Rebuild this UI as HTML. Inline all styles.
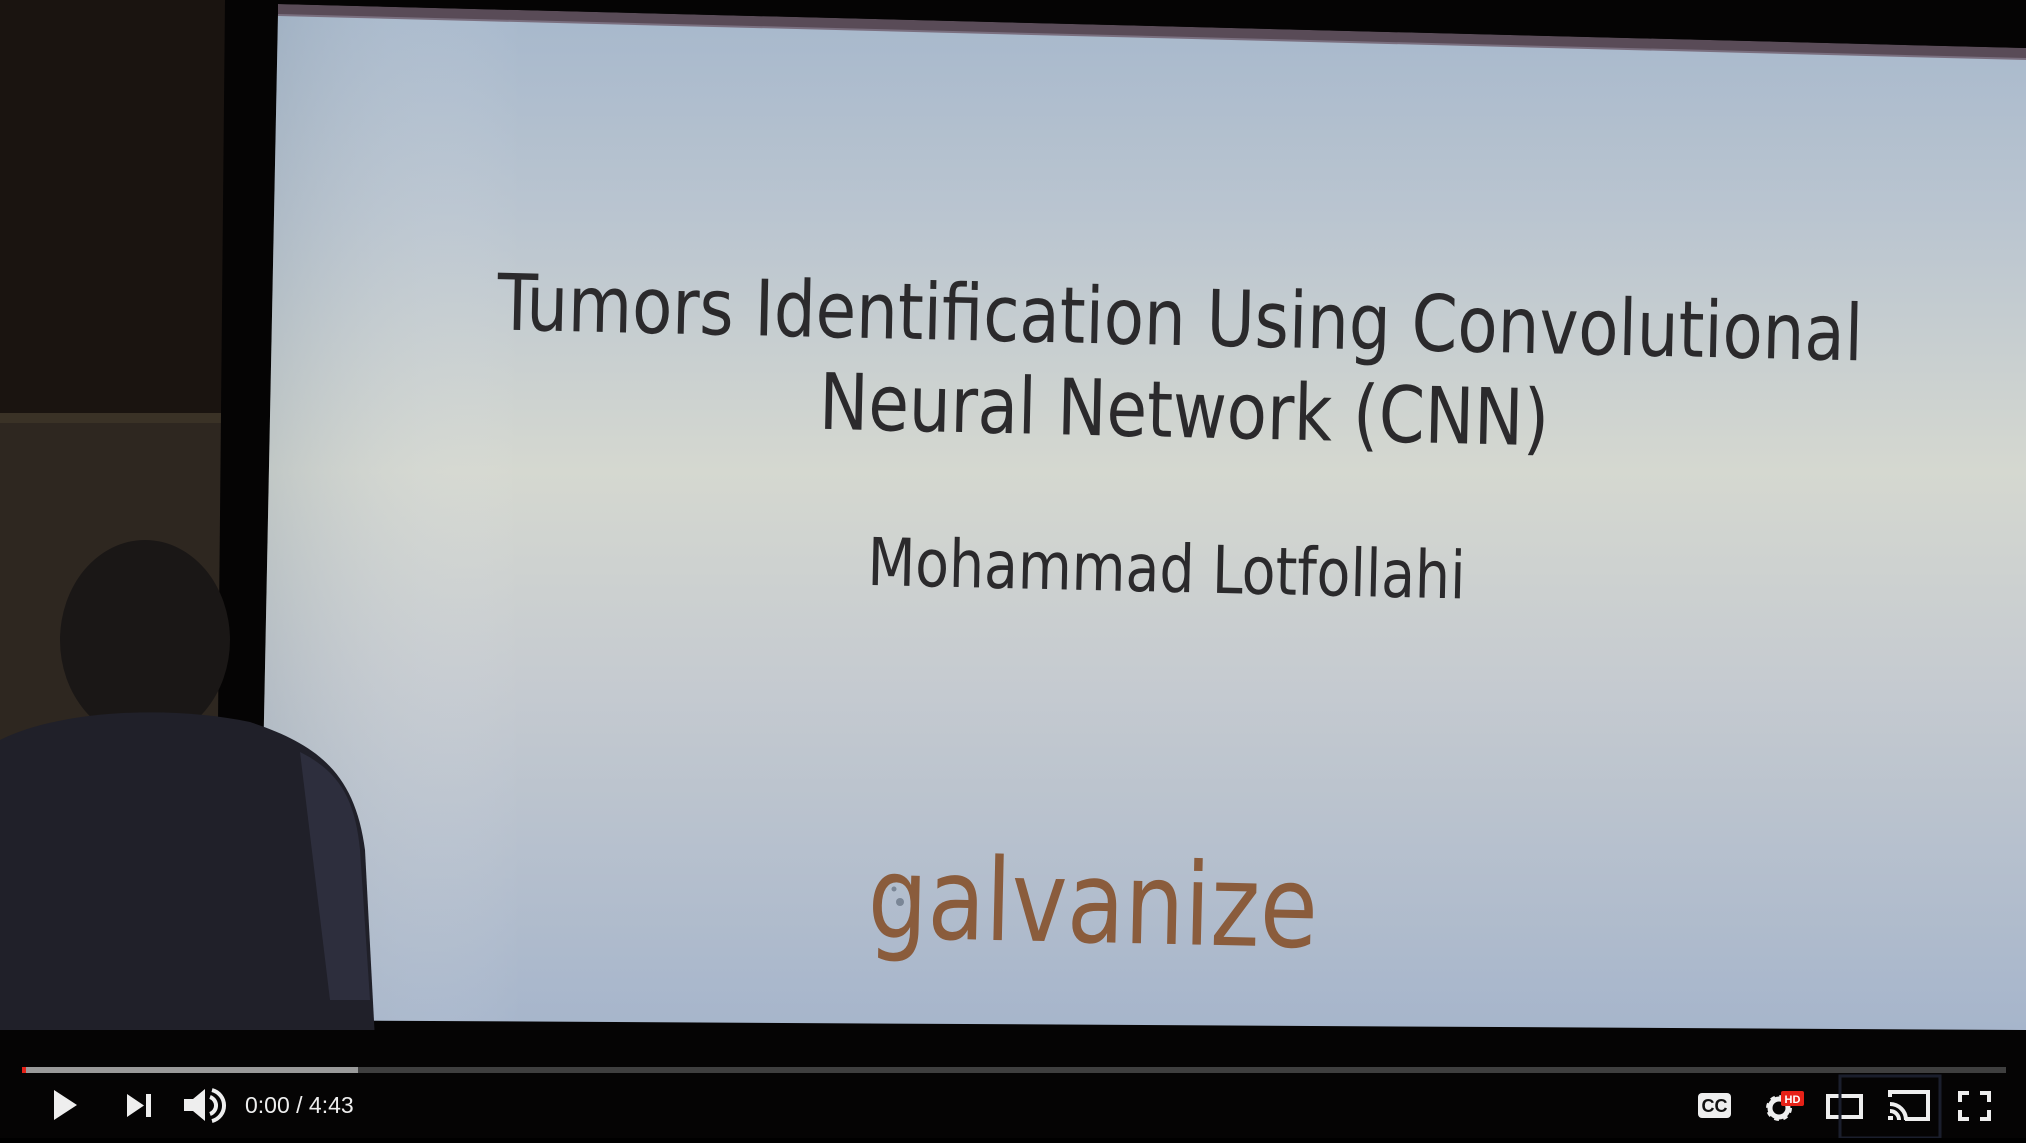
<!DOCTYPE html>
<html><head><meta charset="utf-8"><style>
html,body{margin:0;padding:0;background:#000;}
body{width:2026px;height:1138px;overflow:hidden;}
</style></head><body>
<svg width="2026" height="1138" viewBox="0 0 2026 1138" xmlns="http://www.w3.org/2000/svg">
<defs>
<linearGradient id="sl" x1="0" y1="0" x2="0" y2="1">
<stop offset="0" stop-color="#a7b8cc"/>
<stop offset="0.2" stop-color="#bac5d0"/>
<stop offset="0.45" stop-color="#d5d8d0"/>
<stop offset="0.65" stop-color="#c6cbd0"/>
<stop offset="1" stop-color="#a6b5cb"/>
</linearGradient>
<linearGradient id="slh" x1="0" y1="0" x2="1" y2="0">
<stop offset="0" stop-color="#8a9aa8" stop-opacity="0.3"/>
<stop offset="0.15" stop-color="#fff" stop-opacity="0"/>
<stop offset="1" stop-color="#fff" stop-opacity="0"/>
</linearGradient>
</defs>
<rect width="2026" height="1138" fill="#060505"/>
<rect x="0" y="0" width="260" height="1040" fill="#1a1410"/>
<rect x="0" y="413" width="225" height="330" fill="#2e2720"/>
<rect x="0" y="413" width="225" height="10" fill="#3a3226"/>
<polygon points="225,0 280,0 262,1030 215,1030" fill="#050404"/>
<polygon points="278,14 2026,58 2026,1030 258,1020" fill="url(#sl)"/>
<polygon points="278,14 2026,58 2026,1030 258,1020" fill="url(#slh)"/>
<polygon points="278,4 2026,48 2026,60 278,16" fill="#6e5c6c" opacity="0.8"/>
<polygon points="278,0 2026,0 2026,48 278,4" fill="#050404"/>
<g transform="rotate(1.3 1180 460)" fill="#2b2a2c" font-family="'DejaVu Sans Condensed','Liberation Sans',sans-serif">
<text x="494" y="345" font-size="78" textLength="1366" lengthAdjust="spacingAndGlyphs">Tumors Identification Using Convolutional</text>
<text x="818" y="437" font-size="78" textLength="730" lengthAdjust="spacingAndGlyphs">Neural Network (CNN)</text>
<text x="870" y="592" font-size="66" textLength="598" lengthAdjust="spacingAndGlyphs">Mohammad Lotfollahi</text>
<text x="878" y="944" font-size="114" fill="#8a5c3c" textLength="450" lengthAdjust="spacingAndGlyphs">galvanize</text>
</g>
<circle cx="900" cy="902" r="4" fill="#7a8696"/><circle cx="894" cy="889" r="2.5" fill="#7a8696"/>
<ellipse cx="145" cy="640" rx="85" ry="100" fill="#1a1716"/>
<path d="M0,740 C60,710 170,705 250,722 C320,745 355,775 365,850 L375,1040 L0,1040 Z" fill="#202029"/>
<path d="M300,752 C340,772 355,800 360,850 L370,1000 L330,1000 Z" fill="#3a3c52" opacity="0.5"/>
<rect x="0" y="1030" width="2026" height="108" fill="#050404"/>
<rect x="22" y="1067" width="1984" height="6" fill="#4a4a4a" opacity="0.85"/>
<rect x="22" y="1067" width="336" height="6" fill="#9a9a9a"/>
<rect x="22" y="1067" width="4" height="6" fill="#e62117"/>
<g fill="#eee">
<polygon points="54,1090 54,1120 77,1105"/>
<polygon points="127,1094 127,1117 144,1105.5"/>
<rect x="146" y="1094" width="5" height="23"/>
<polygon points="184,1099 193,1099 205,1089 205,1121 193,1111 184,1111"/>
</g>
<path d="M210,1097 a9,9 0 0 1 0,17" stroke="#eee" stroke-width="4" fill="none"/>
<path d="M212,1090 a16,16 0 0 1 0,31" stroke="#eee" stroke-width="4" fill="none"/>
<text x="245" y="1113" font-family="'Liberation Sans',sans-serif" font-size="23" fill="#eee">0:00 / 4:43</text>
<rect x="1698" y="1093" width="33" height="25" rx="4" fill="#eee"/>
<text x="1714.5" y="1112" text-anchor="middle" font-family="'Liberation Sans',sans-serif" font-weight="bold" font-size="18" fill="#111">CC</text>
<g transform="translate(1779,1108)">
<circle r="10" fill="none" stroke="#eee" stroke-width="6" stroke-dasharray="4 3.85"/>
<circle r="9" fill="none" stroke="#eee" stroke-width="5"/>
</g>
<rect x="1781" y="1091" width="23" height="15" rx="2" fill="#e62117"/>
<text x="1792.5" y="1103" text-anchor="middle" font-family="'Liberation Sans',sans-serif" font-weight="bold" font-size="11" fill="#fff">HD</text>
<rect x="1828" y="1096" width="33" height="21" fill="none" stroke="#eee" stroke-width="4"/>
<rect x="1840" y="1076" width="100" height="62" fill="none" stroke="#1a1e2c" stroke-width="3"/>
<path d="M1890,1097 V1092 H1928 V1119 H1905" fill="none" stroke="#eee" stroke-width="4"/>
<path d="M1890,1104 a16,16 0 0 1 16,16 M1890,1111 a9,9 0 0 1 9,9" fill="none" stroke="#eee" stroke-width="4"/>
<rect x="1888" y="1116" width="5" height="4" fill="#eee"/>
<path d="M1960,1102 V1093 H1969 M1980,1093 H1989 V1102 M1989,1110 V1119 H1980 M1969,1119 H1960 V1110" fill="none" stroke="#eee" stroke-width="4"/>
</svg>
</body></html>
